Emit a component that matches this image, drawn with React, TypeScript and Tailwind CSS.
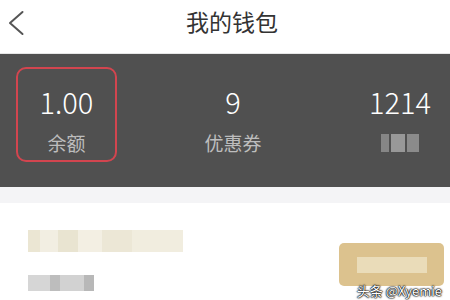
const font = { fontFamily: '"Noto Sans CJK SC", "Noto Sans", sans-serif' }

function Stat({ value, label, blurred }: { value: string; label: string; blurred?: boolean }) {
  return (
    <div className="flex flex-col items-center">
      <div className="text-[29px] leading-[32px] font-light text-white">{value}</div>
      {blurred ? (
        <div className="mt-[17px] flex h-[18px] w-[38px] gap-[2px] opacity-90">
          <div className="w-[8px] bg-[#8c8c8c]" />
          <div className="w-[14px] bg-[#a0a0a0]" />
          <div className="w-[12px] bg-[#929292]" />
        </div>
      ) : (
        <div className="mt-[16px] text-[19px] leading-[20px] text-[#bdbdbd]">{label}</div>
      )}
    </div>
  )
}

export default function App() {
  return (
    <div className="flex h-[300px] w-[450px] flex-col overflow-hidden bg-white" style={font}>
      <header className="relative flex h-[54px] shrink-0 justify-center border-b border-[#e6e6e6] pl-[14px] pt-[8px]">
        <svg
          className="absolute left-[6px] top-[9px]"
          width="22"
          height="28"
          viewBox="0 0 22 28"
          fill="none"
          stroke="#555"
          strokeWidth="2"
          strokeLinecap="round"
          strokeLinejoin="round"
        >
          <polyline points="16.5,3 4,14 16.5,25" />
        </svg>
        <h1 className="text-[23px] leading-[26px] text-[#333]">我的钱包</h1>
      </header>

      <section className="grid h-[133px] shrink-0 grid-cols-3 items-start bg-[#505050] pt-[13px]">
        <div className="flex justify-start pl-[16px]">
          <div className="flex h-[95px] w-[101px] justify-center rounded-[10px] border-2 border-[#d2454f] pt-[16px]">
            <Stat value="1.00" label="余额" />
          </div>
        </div>
        <div className="flex justify-center pl-[16px] pt-[18px]">
          <Stat value="9" label="优惠券" />
        </div>
        <div className="flex justify-end pr-[19px] pt-[18px]">
          <Stat value="1214" label="" blurred />
        </div>
      </section>

      <div className="h-[16px] shrink-0 bg-[#f4f4f6]" />

      <section className="relative flex flex-1 items-start justify-between pl-[28px] pr-[6px] pt-[27px]">
        <div className="flex flex-col">
          <div className="flex h-[22px] w-[155px] bg-[#efeadb]">
            <div className="w-[12px] bg-[#ebe6d3]" />
            <div className="w-[18px] bg-[#f2eee2]" />
            <div className="w-[20px] bg-[#e9e4d1]" />
            <div className="w-[24px] bg-[#f3efe3]" />
            <div className="w-[30px] bg-[#ece7d6]" />
            <div className="flex-1 bg-[#f1eddf]" />
          </div>
          <div className="mt-[23px] flex h-[16px] w-[66px] bg-[#d4d4d4]">
            <div className="w-[22px] bg-[#d6d6d6]" />
            <div className="w-[10px] bg-[#bdbdbd]" />
            <div className="w-[24px] bg-[#d2d2d2]" />
            <div className="flex-1 bg-[#b8b8b8]" />
          </div>
        </div>
        <div className="mt-[13px] flex h-[43px] w-[105px] items-center justify-center rounded-[5px] bg-[#dcc28e]">
          <div className="h-[16px] w-[70px] bg-[#eadcb9]" />
        </div>
        <div
          className="absolute bottom-[0px] right-[8px] text-[13px] leading-[18px] text-white"
          style={{ textShadow: '0 0 1px #000, 0 0 1px #000, 0 0 2px #222, 0 0 2px #222' }}
        >
          头条 @Xyemie
        </div>
      </section>
    </div>
  )
}
